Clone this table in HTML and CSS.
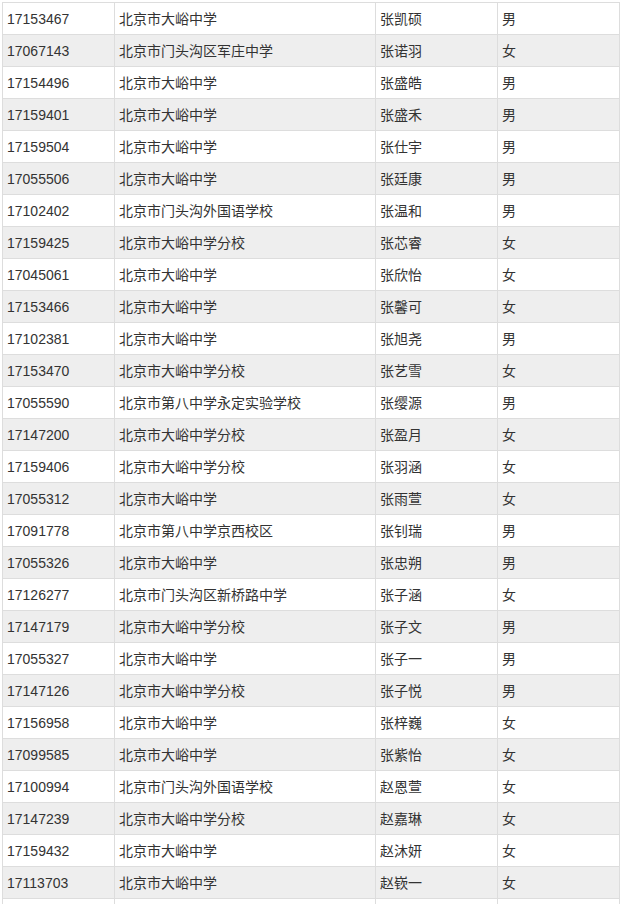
FILE: index.html
```html
<!DOCTYPE html>
<html lang="zh-CN">
<head>
<meta charset="utf-8">
<link rel="stylesheet" href="styles.css">
</head>
<body>
<table class="list">
<colgroup><col class="c1"><col class="c2"><col class="c3"><col class="c4"></colgroup>
<tbody>
<tr><td>17153467</td><td>北京市大峪中学</td><td>张凯硕</td><td>男</td></tr>
<tr><td>17067143</td><td>北京市门头沟区军庄中学</td><td>张诺羽</td><td>女</td></tr>
<tr><td>17154496</td><td>北京市大峪中学</td><td>张盛皓</td><td>男</td></tr>
<tr><td>17159401</td><td>北京市大峪中学</td><td>张盛禾</td><td>男</td></tr>
<tr><td>17159504</td><td>北京市大峪中学</td><td>张仕宇</td><td>男</td></tr>
<tr><td>17055506</td><td>北京市大峪中学</td><td>张廷康</td><td>男</td></tr>
<tr><td>17102402</td><td>北京市门头沟外国语学校</td><td>张温和</td><td>男</td></tr>
<tr><td>17159425</td><td>北京市大峪中学分校</td><td>张芯睿</td><td>女</td></tr>
<tr><td>17045061</td><td>北京市大峪中学</td><td>张欣怡</td><td>女</td></tr>
<tr><td>17153466</td><td>北京市大峪中学</td><td>张馨可</td><td>女</td></tr>
<tr><td>17102381</td><td>北京市大峪中学</td><td>张旭尧</td><td>男</td></tr>
<tr><td>17153470</td><td>北京市大峪中学分校</td><td>张艺雪</td><td>女</td></tr>
<tr><td>17055590</td><td>北京市第八中学永定实验学校</td><td>张缨源</td><td>男</td></tr>
<tr><td>17147200</td><td>北京市大峪中学分校</td><td>张盈月</td><td>女</td></tr>
<tr><td>17159406</td><td>北京市大峪中学分校</td><td>张羽涵</td><td>女</td></tr>
<tr><td>17055312</td><td>北京市大峪中学</td><td>张雨萱</td><td>女</td></tr>
<tr><td>17091778</td><td>北京市第八中学京西校区</td><td>张钊瑞</td><td>男</td></tr>
<tr><td>17055326</td><td>北京市大峪中学</td><td>张忠朔</td><td>男</td></tr>
<tr><td>17126277</td><td>北京市门头沟区新桥路中学</td><td>张子涵</td><td>女</td></tr>
<tr><td>17147179</td><td>北京市大峪中学分校</td><td>张子文</td><td>男</td></tr>
<tr><td>17055327</td><td>北京市大峪中学</td><td>张子一</td><td>男</td></tr>
<tr><td>17147126</td><td>北京市大峪中学分校</td><td>张子悦</td><td>男</td></tr>
<tr><td>17156958</td><td>北京市大峪中学</td><td>张梓巍</td><td>女</td></tr>
<tr><td>17099585</td><td>北京市大峪中学</td><td>张紫怡</td><td>女</td></tr>
<tr><td>17100994</td><td>北京市门头沟外国语学校</td><td>赵恩萱</td><td>女</td></tr>
<tr><td>17147239</td><td>北京市大峪中学分校</td><td>赵嘉琳</td><td>女</td></tr>
<tr><td>17159432</td><td>北京市大峪中学</td><td>赵沐妍</td><td>女</td></tr>
<tr><td>17113703</td><td>北京市大峪中学</td><td>赵嵚一</td><td>女</td></tr>
<tr><td>&nbsp;</td><td>&nbsp;</td><td>&nbsp;</td><td>&nbsp;</td></tr>
</tbody>
</table>
</body>
</html>
```
FILE: styles.css
```css
html, body {
  margin: 0;
  padding: 0;
  background: #fff;
  overflow: hidden;
}
body {
  font-family: "Liberation Sans", "Noto Sans CJK SC", sans-serif;
  font-size: 14px;
  color: #333;
}
.list {
  border-collapse: collapse;
  table-layout: fixed;
  width: 617px;
  margin: 2px 0 0 2px;
}
.c1 { width: 112px; }
.c2 { width: 261px; }
.c3 { width: 122px; }
.c4 { width: 122px; }
.list td {
  border: 1px solid #ddd;
  height: 32px;
  padding: 0 4px;
  box-sizing: border-box;
  line-height: 20px;
  vertical-align: middle;
  white-space: nowrap;
}
.list tr:nth-child(even) td {
  background: #eee;
}
```
